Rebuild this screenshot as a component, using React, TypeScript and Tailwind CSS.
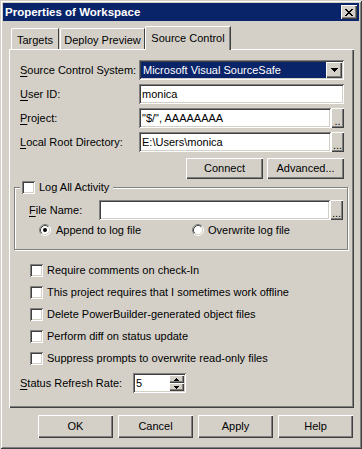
import React from "react";

const raised =
  "shadow-[inset_1px_1px_#ffffff,inset_-1px_-1px_#404040,inset_-2px_-2px_#808080]";
const sunken =
  "shadow-[inset_1px_1px_#808080,inset_-1px_-1px_#ffffff,inset_2px_2px_#404040,inset_-2px_-2px_#d4d0c8]";

function Btn({ label, w, h }: { label: string; w: string; h: string }) {
  return (
    <div className={`${w} ${h} bg-[#d4d0c8] flex items-center justify-center ${raised}`}>
      {label}
    </div>
  );
}

function DotsBtn({ label }: { label: string }) {
  return (
    <div className={`w-[13px] h-[20px] bg-[#d4d0c8] flex items-end justify-center pb-[3px] leading-[8px] ${raised}`}>
      {label}
    </div>
  );
}

function Check() {
  return <div className={`w-[13px] h-[13px] shrink-0 bg-white ${sunken}`} />;
}

function Radio({ checked }: { checked: boolean }) {
  return (
    <svg width="12" height="12" viewBox="0 0 12 12" className="shrink-0">
      <circle cx="6" cy="6" r="5" fill="#ffffff" />
      <path d="M2.11 9.89A5.5 5.5 0 0 1 9.89 2.11" stroke="#808080" strokeWidth="1" fill="none" />
      <path d="M9.89 2.11A5.5 5.5 0 0 1 2.11 9.89" stroke="#ffffff" strokeWidth="1" fill="none" />
      <path d="M2.82 9.18A4.5 4.5 0 0 1 9.18 2.82" stroke="#404040" strokeWidth="1" fill="none" />
      <path d="M9.18 2.82A4.5 4.5 0 0 1 2.82 9.18" stroke="#d4d0c8" strokeWidth="1" fill="none" />
      {checked && <circle cx="6" cy="6" r="2" fill="#000000" />}
    </svg>
  );
}

function U({ c }: { c: string }) {
  return <span className="underline underline-offset-[2px]">{c}</span>;
}

function Row({ label, children }: { label: React.ReactNode; children: React.ReactNode }) {
  return (
    <div className="flex items-center h-[20px] pl-[11px]">
      <div className="w-[119px]">{label}</div>
      {children}
    </div>
  );
}

function CheckRow({ text }: { text: string }) {
  return (
    <div className="flex items-center h-[13px] gap-[4px] ml-[21px]">
      <Check />
      <span>{text}</span>
    </div>
  );
}

export default function App() {
  return (
    <div className="w-[362px] h-[449px] bg-[#d4d0c8] p-[3px] flex flex-col font-['Liberation_Sans',Arial,sans-serif] text-[11px] leading-[13px] text-black select-none shadow-[inset_1px_1px_#d4d0c8,inset_-1px_-1px_#404040,inset_2px_2px_#ffffff,inset_-2px_-2px_#808080]">
      {/* Title bar */}
      <div className="h-[18px] shrink-0 bg-[#0a246a] flex items-center justify-between pl-[2px] pr-[2px]">
        <span className="text-white font-bold text-[11.5px]">Properties of Workspace</span>
        <div className={`w-[16px] h-[14px] bg-[#d4d0c8] flex items-center justify-center ${raised}`}>
          <svg width="8" height="7" viewBox="0 0 8 7" shapeRendering="crispEdges">
            <path
              d="M0 0h2v1H0zM6 0h2v1H6zM1 1h2v1H1zM5 1h2v1H5zM2 2h4v1H2zM3 3h2v1H3zM2 4h4v1H2zM1 5h2v1H1zM5 5h2v1H5zM0 6h2v1H0zM6 6h2v1H6z"
              fill="#000000"
            />
          </svg>
        </div>
      </div>

      {/* Tabs */}
      <div className="relative z-10 flex items-end h-[28px] shrink-0 pl-[8px]">
        <div className="w-[48px] h-[21px] bg-[#d4d0c8] border-t border-l border-white rounded-tl-[2px] border-r border-r-[#404040] flex items-center justify-center pt-[2px]">
          Targets
        </div>
        <div className="ml-[1px] w-[85px] h-[21px] bg-[#d4d0c8] border-t border-l border-white rounded-tl-[2px] border-r border-r-[#404040] flex items-center justify-center pt-[2px]">
          Deploy Preview
        </div>
        <div className="w-[86px] h-[24px] -mb-[1px] bg-[#d4d0c8] border-t border-l border-white rounded-tl-[2px] border-r border-r-[#404040] shadow-[inset_-1px_0_#808080] flex items-center justify-center pb-[1px]">
          Source Control
        </div>
      </div>

      {/* Panel */}
      <div className={`ml-[6px] w-[345px] h-[359px] shrink-0 bg-[#d4d0c8] flex flex-col pt-[11px] ${raised}`}>
        <div className="flex flex-col gap-[4px]">
          <Row label={<><U c="S" />ource Control System:</>}>
            <div className={`w-[205px] h-[20px] bg-white p-[2px] flex ${sunken}`}>
              <div className="flex-1 bg-[#0a246a] text-white flex items-center pl-[2px]">
                Microsoft Visual SourceSafe
              </div>
              <div className={`w-[16px] h-full bg-[#d4d0c8] flex items-center justify-center ${raised}`}>
                <svg width="7" height="4" viewBox="0 0 7 4" shapeRendering="crispEdges">
                  <path d="M0 0h7v1H0zM1 1h5v1H1zM2 2h3v1H2zM3 3h1v1H3z" fill="#000000" />
                </svg>
              </div>
            </div>
          </Row>
          <Row label={<><U c="U" />ser ID:</>}>
            <div className={`w-[205px] h-[20px] bg-white flex items-center pl-[3px] ${sunken}`}>monica</div>
          </Row>
          <Row label={<><U c="P" />roject:</>}>
            <div className={`w-[192px] h-[20px] bg-white flex items-center pl-[3px] ${sunken}`}>"$/", AAAAAAAA</div>
            <DotsBtn label=".." />
          </Row>
          <Row label={<><U c="L" />ocal Root Directory:</>}>
            <div className={`w-[192px] h-[20px] bg-white flex items-center pl-[3px] ${sunken}`}>E:\Users\monica</div>
            <DotsBtn label="..." />
          </Row>
        </div>

        <div className="flex justify-end gap-[4px] pr-[10px] mt-[6px]">
          <Btn label="Connect" w="w-[77px]" h="h-[21px]" />
          <Btn label="Advanced..." w="w-[77px]" h="h-[21px]" />
        </div>

        {/* Group box */}
        <div className="mt-[8px] ml-[5px] w-[334px] border border-[#808080] shadow-[inset_1px_1px_#ffffff,1px_1px_#ffffff] pb-[13px]">
          <div className="-mt-[7px] ml-[5px] w-fit pl-[2px] pr-[4px] bg-[#d4d0c8] flex items-center gap-[4px] h-[13px]">
            <Check />
            <span>Log All Activity</span>
          </div>
          <div className="mt-[6px] flex items-center h-[20px] pl-[14px]">
            <div className="w-[70px]">
              <U c="F" />ile Name:
            </div>
            <div className={`w-[231px] h-[20px] bg-white ${sunken}`} />
            <DotsBtn label="..." />
          </div>
          <div className="mt-[4px] flex items-center h-[12px] pl-[24px]">
            <div className="w-[153px] flex items-center gap-[5px]">
              <Radio checked={true} />
              <span>Append to log file</span>
            </div>
            <div className="flex items-center gap-[4px]">
              <Radio checked={false} />
              <span>Overwrite log file</span>
            </div>
          </div>
        </div>

        <div className="mt-[14px] flex flex-col gap-[9px]">
          <CheckRow text="Require comments on check-In" />
          <CheckRow text="This project requires that I sometimes work offline" />
          <CheckRow text="Delete PowerBuilder-generated object files" />
          <CheckRow text="Perform diff on status update" />
          <CheckRow text="Suppress prompts to overwrite read-only files" />
        </div>

        <div className="mt-[8px] flex items-center h-[20px] pl-[11px]">
          <div className="w-[113px]">
            <U c="S" />tatus Refresh Rate:
          </div>
          <div className={`w-[53px] h-[20px] bg-white p-[2px] flex ${sunken}`}>
            <div className="flex-1 flex items-center pl-[1px]">5</div>
            <div className="w-[15px] flex flex-col">
              <div className={`h-[8px] bg-[#d4d0c8] flex items-center justify-center ${raised}`}>
                <svg width="5" height="3" viewBox="0 0 5 3" shapeRendering="crispEdges">
                  <path d="M2 0h1v1H2zM1 1h3v1H1zM0 2h5v1H0z" fill="#000000" />
                </svg>
              </div>
              <div className={`h-[8px] bg-[#d4d0c8] flex items-center justify-center ${raised}`}>
                <svg width="5" height="3" viewBox="0 0 5 3" shapeRendering="crispEdges">
                  <path d="M0 0h5v1H0zM1 1h3v1H1zM2 2h1v1H2z" fill="#000000" />
                </svg>
              </div>
            </div>
          </div>
        </div>
      </div>

      {/* Bottom buttons */}
      <div className="flex gap-[5px] ml-[35px] mt-[7px]">
        <Btn label="OK" w="w-[75px]" h="h-[23px]" />
        <Btn label="Cancel" w="w-[75px]" h="h-[23px]" />
        <Btn label="Apply" w="w-[75px]" h="h-[23px]" />
        <Btn label="Help" w="w-[75px]" h="h-[23px]" />
      </div>
    </div>
  );
}
